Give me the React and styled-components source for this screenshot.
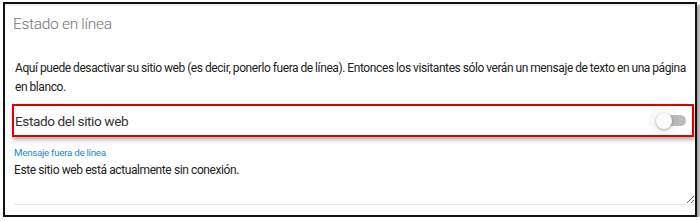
import React from "react";
import styled, { createGlobalStyle } from "styled-components";

const Global = createGlobalStyle`
  html, body { margin: 0; padding: 0; background: #ffffff; }
  body { font-family: Roboto, "Liberation Sans", Arial, sans-serif; }
  * { box-sizing: border-box; }
`;

const Frame = styled.div`
  margin: 2px 0 0 3px;
  width: 694px;
  height: 215px;
  border: 2px solid #111;
  box-shadow: 3px 3px 2px rgba(0, 0, 0, 0.35), inset 0 3px 3px -2px rgba(0, 0, 0, 0.12);
  background: #fff;
  padding: 10px 0 0 7px;
  overflow: hidden;
  display: flex;
  flex-direction: column;
`;

const Title = styled.h2`
  margin: 0;
  font-family: Roboto, "Liberation Sans", sans-serif;
  font-weight: 300;
  font-size: 15.5px;
  letter-spacing: -0.3px;
  line-height: 20px;
  color: #757575;
  padding-left: 1px;
`;

const Description = styled.p`
  margin: 25px 0 0;
  padding-left: 3px;
  padding-right: 0;
  font-size: 12px;
  letter-spacing: -0.4px;
  word-spacing: -0.3px;
  line-height: 19px;
  color: #222;
`;

const Highlight = styled.div`
  margin-top: 7px;
  height: 33px;
  border: 2px solid #e00000;
  box-shadow: 1px 3px 4px rgba(0, 0, 0, 0.3);
  display: flex;
  align-items: center;
  justify-content: space-between;
  padding: 0 6px 0 1px;
  margin-right: 1px;
`;

const RowLabel = styled.span`
  font-size: 13.6px;
  letter-spacing: -0.4px;
  color: #333;
`;

const Switch = styled.div`
  position: relative;
  width: 30px;
  height: 16px;
  display: flex;
  align-items: center;
  justify-content: flex-end;
`;

const Track = styled.div`
  width: 24px;
  height: 11px;
  border-radius: 6px;
  background: #bdbdbd;
`;

const Thumb = styled.div`
  position: absolute;
  left: 0;
  top: 0;
  width: 16px;
  height: 16px;
  border-radius: 50%;
  background: #fafafa;
  box-shadow: 0 1px 3px rgba(0, 0, 0, 0.35), 0 0 0 7px rgba(0, 0, 0, 0.025);
`;

const FieldLabel = styled.label`
  margin-top: 9px;
  padding-left: 2px;
  font-size: 9.8px;
  letter-spacing: -0.3px;
  line-height: 13px;
  color: #1e88d4;
`;

const MessageField = styled.textarea`
  margin: 2px 0 0 2px;
  height: 44px;
  border: none;
  border-bottom: 1px solid #e6e6e6;
  padding: 0;
  font-family: Roboto, "Liberation Sans", sans-serif;
  font-size: 12px;
  letter-spacing: -0.4px;
  line-height: 18px;
  color: #222;
  resize: vertical;
  outline: none;
  background: transparent;
`;

export default function App() {
  return (
    <>
      <Global />
      <Frame>
        <Title>Estado en línea</Title>
        <Description>
          Aquí puede desactivar su sitio web (es decir, ponerlo fuera de línea). Entonces los visitantes sólo verán un mensaje de texto en una página en blanco.
        </Description>
        <Highlight>
          <RowLabel>Estado del sitio web</RowLabel>
          <Switch>
            <Track />
            <Thumb />
          </Switch>
        </Highlight>
        <FieldLabel>Mensaje fuera de línea</FieldLabel>
        <MessageField readOnly defaultValue="Este sitio web está actualmente sin conexión." />
      </Frame>
    </>
  );
}
